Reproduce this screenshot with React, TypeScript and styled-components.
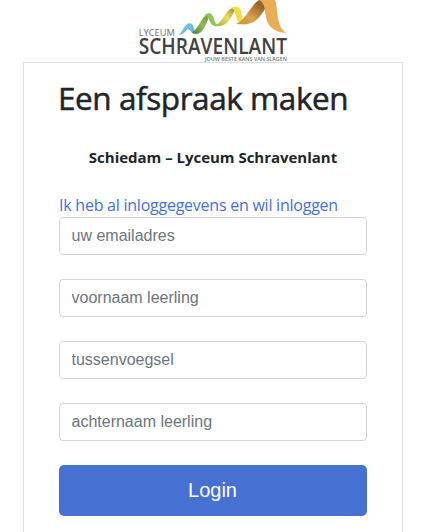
import React from "react";
import styled, { createGlobalStyle } from "styled-components";

const GlobalStyle = createGlobalStyle`
  *, *::before, *::after { box-sizing: border-box; }
  html, body { margin: 0; height: 532px; overflow: hidden; }
  body {
    background: #fff;
    color: #212529;
    font: 400 16px/24px "Segoe UI", "Open Sans", "Noto Sans", sans-serif;
  }
`;

const Page = styled.main`
  display: flex;
  flex-direction: column;
  height: 532px;
  overflow: hidden;
  padding: 0 21px 0 23px;
`;

const LogoImage = styled.svg`
  display: block;
  flex: none;
  width: 170px;
  height: 62px;
  margin-left: 107px;
  overflow: visible;
  font-family: "Open Sans", "Noto Sans", sans-serif;
`;

const Card = styled.section`
  display: flex;
  flex-direction: column;
  flex: none;
  height: 520px;
  border: 1px solid #dfdfdf;
  padding: 16px 35px;
`;

const Title = styled.h1`
  margin: 0 0 0 -1px;
  font-size: 31.5px;
  line-height: 38px;
  font-weight: 500;
  letter-spacing: -0.43px;
  -webkit-text-stroke: 0.5px currentColor;
  white-space: nowrap;
`;

const School = styled.p`
  margin: 28px 0 24px;
  text-align: center;
  font-size: 15px;
  font-weight: 700;
  letter-spacing: -0.02px;
  white-space: nowrap;
`;

const LoginLink = styled.a`
  color: #4671d2;
  letter-spacing: -0.24px;
  text-decoration: none;
  white-space: nowrap;
`;

const Form = styled.form`
  display: flex;
  flex-direction: column;
  gap: 24px;
`;

const Field = styled.input`
  width: 100%;
  height: 38px;
  padding: 6px 11.5px;
  border: 1px solid #d3d4d5;
  border-radius: 4px;
  background: #fff;
  font: 16px/24px "Liberation Sans", Arial, sans-serif;
  &::placeholder { color: #6c757d; opacity: 1; }
`;

const Submit = styled.button`
  height: 51px;
  padding: 0 1px 2px 0;
  border: 0;
  border-radius: 5px;
  background: #4671d2;
  color: #fff;
  font: 20px/30px "Liberation Sans", Arial, sans-serif;
`;

function Logo() {
  return (
    <LogoImage viewBox="0 0 510 186" role="img" aria-label="Lyceum Schravenlant">
      <defs>
        <linearGradient id="blue" x1="0" x2="1">
          <stop offset="0" stopColor="#65b5dc" />
          <stop offset=".6" stopColor="#78bfdf" />
          <stop offset="1" stopColor="#2d91bd" />
        </linearGradient>
        <linearGradient id="greenRise" x1="0" y1="1" x2="1" y2="0">
          <stop offset="0" stopColor="#55803c" />
          <stop offset=".5" stopColor="#94b858" />
          <stop offset="1" stopColor="#678f35" />
        </linearGradient>
        <linearGradient id="yellowRise" x1="0" y1="1" x2="1" y2="0">
          <stop offset="0" stopColor="#a2a936" />
          <stop offset=".5" stopColor="#eee05b" />
          <stop offset="1" stopColor="#8f7c28" />
        </linearGradient>
        <linearGradient id="orangeRise" x1="0" y1="1" x2="1" y2="0">
          <stop offset="0" stopColor="#c39a3c" />
          <stop offset=".35" stopColor="#dda14c" />
          <stop offset=".75" stopColor="#96632a" />
          <stop offset="1" stopColor="#b37b34" />
        </linearGradient>
      </defs>
      <path d="M146 105C160 95 163 70 181 70C193 70 188 97 205 100C187 109 181 88 174 88C168 89 164 104 146 105Z" fill="url(#blue)" />
      <path d="M184 96C205 96 212 40 243 41C232 55 225 98 202 101C194 102 187 99 184 96Z" fill="url(#greenRise)" />
      <path d="M222 46C250 26 250 58 257 70C261 76 265 77 271 77C252 83 242 74 238 61C235 52 230 46 222 46Z" fill="#8bc653" />
      <path d="M256 76C278 70 287 20 320 22C309 40 297 75 272 78Z" fill="url(#yellowRise)" />
      <path d="M300 25C330 12 333 28 336 49C338 62 345 71 357 71C337 78 322 68 318 48C315 33 311 25 300 25Z" fill="#f2de3e" />
      <path d="M318 71C348 62 362 15 387 0H421C403 29 386 69 351 72C340 73 330 73 318 71Z" fill="url(#orangeRise)" />
      <path d="M387 0H435C444 17 437 86 470 98C432 99 410 77 406 41C404 20 400 5 387 0Z" fill="#e8ad55" />
      <text x="26" y="108" fontSize="26.5" fill="#6f6f6f" textLength="109" lengthAdjust="spacingAndGlyphs">LYCEUM</text>
      <text x="26" y="163" fontSize="65" fontWeight="600" fill="#414141" textLength="445" lengthAdjust="spacingAndGlyphs">SCHRAVENLANT</text>
      <text x="225" y="183.5" fontSize="15.5" fontWeight="600" fill="#777" textLength="246" lengthAdjust="spacingAndGlyphs">JOUW BESTE KANS VAN SLAGEN</text>
    </LogoImage>
  );
}

const fields = ["uw emailadres", "voornaam leerling", "tussenvoegsel", "achternaam leerling"];

export default function App() {
  return (
    <>
      <GlobalStyle />
      <Page>
        <Logo />
        <Card>
          <Title>Een afspraak maken</Title>
          <School>Schiedam – Lyceum Schravenlant</School>
          <LoginLink href="#">Ik heb al inloggegevens en wil inloggen</LoginLink>
          <Form>
            {fields.map((label) => (
              <Field key={label} placeholder={label} aria-label={label} />
            ))}
            <Submit type="button">Login</Submit>
          </Form>
        </Card>
      </Page>
    </>
  );
}
